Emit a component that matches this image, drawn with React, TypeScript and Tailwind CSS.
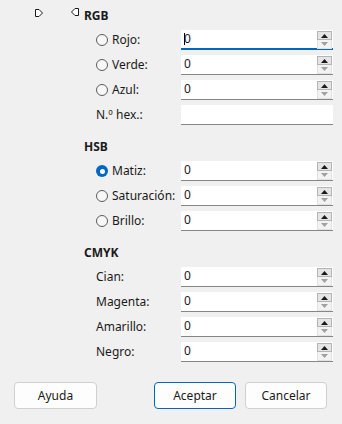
import React from 'react';

type Row = { label: string; radio?: boolean; checked?: boolean; spin?: boolean; value?: string; focused?: boolean };

const rgb: Row[] = [
  { label: 'Rojo:', radio: true, spin: true, value: '0', focused: true },
  { label: 'Verde:', radio: true, spin: true, value: '0' },
  { label: 'Azul:', radio: true, spin: true, value: '0' },
  { label: 'N.º hex.:', value: '' },
];

const hsb: Row[] = [
  { label: 'Matiz:', radio: true, checked: true, spin: true, value: '0' },
  { label: 'Saturación:', radio: true, spin: true, value: '0' },
  { label: 'Brillo:', radio: true, spin: true, value: '0' },
];

const cmyk: Row[] = [
  { label: 'Cian:', spin: true, value: '0' },
  { label: 'Magenta:', spin: true, value: '0' },
  { label: 'Amarillo:', spin: true, value: '0' },
  { label: 'Negro:', spin: true, value: '0' },
];

function Radio({ checked }: { checked?: boolean }) {
  if (checked) {
    return (
      <span className="w-[12px] h-[12px] rounded-full bg-[#0067c0] flex items-center justify-center shrink-0">
        <span className="w-[5px] h-[5px] rounded-full bg-white"></span>
      </span>
    );
  }
  return <span className="w-[12px] h-[12px] rounded-full border border-[#5c5c5c] bg-[#f7f7f7] shrink-0"></span>;
}

function Spin() {
  return (
    <div className="absolute right-[1px] top-[1px] w-[15px] flex flex-col">
      <div className="h-[9px] border border-[#b4b4b4] bg-[#e5e5e5] flex items-center justify-center">
        <svg width="7" height="4" viewBox="0 0 7 4"><path d="M0 4 L3.5 0 L7 4 Z" fill="#1a1a1a" /></svg>
      </div>
      <div className="h-[9px] border border-[#e2e2e2] border-t-0 bg-[#f3f3f3] flex items-center justify-center">
        <svg width="7" height="4" viewBox="0 0 7 4"><path d="M0 0 L3.5 4 L7 0 Z" fill="#a0a0a0" /></svg>
      </div>
    </div>
  );
}

function Field({ row }: { row: Row }) {
  return (
    <div className="flex items-center h-[20px]">
      <div className="w-[85px] flex items-center gap-[4px] shrink-0">
        {row.radio && <Radio checked={row.checked} />}
        <span className="text-[12px] leading-[16px] text-[#1a1a1a] whitespace-nowrap">{row.label}</span>
      </div>
      <div
        className={
          row.focused
            ? 'relative w-[152px] h-[20px] bg-white border-b-2 border-[#0067c0]'
            : 'relative w-[152px] h-[20px] bg-white border-b border-[#868686]'
        }
      >
        <span className="absolute left-[3px] top-[1px] text-[12px] leading-[16px] text-[#1a1a1a]">{row.value}</span>
        {row.focused && <span className="absolute left-[3px] top-[3px] w-px h-[12px] bg-black"></span>}
        {row.spin && <Spin />}
      </div>
    </div>
  );
}

function Group({ title, rows, first }: { title: string; rows: Row[]; first?: boolean }) {
  return (
    <div className={first ? 'flex flex-col' : 'flex flex-col mt-[14px]'}>
      <div className="h-[16px] text-[12px] leading-[16px] font-bold text-[#1a1a1a] mb-[6px]">{title}</div>
      <div className="flex flex-col gap-[5px] pl-[12px]">
        {rows.map((r) => (
          <Field key={r.label} row={r} />
        ))}
      </div>
    </div>
  );
}

export default function App() {
  return (
    <div
      className="w-[342px] h-[424px] bg-[#f0f0f0] flex flex-col overflow-hidden"
      style={{ fontFamily: '"Noto Sans", "Open Sans", Arial, sans-serif' }}
    >
      <div className="flex pt-[8px]">
        <div className="w-[84px] flex items-start pl-[35px] gap-[28px] pt-[1px] shrink-0">
          <svg width="8" height="8" viewBox="0 0 8 8">
            <path d="M0.5 0.5 H4 L7.5 4 L4 7.5 H0.5 Z" fill="#ffffff" stroke="#1a1a1a" strokeWidth="1" />
          </svg>
          <svg width="8" height="8" viewBox="0 0 8 8" className="-mt-[1px]">
            <path d="M7.5 0.5 H4 L0.5 4 L4 7.5 H7.5 Z" fill="#ffffff" stroke="#1a1a1a" strokeWidth="1" />
          </svg>
        </div>
        <div className="flex flex-col">
          <Group title="RGB" rows={rgb} first />
          <Group title="HSB" rows={hsb} />
          <Group title="CMYK" rows={cmyk} />
        </div>
      </div>
      <div className="flex mt-[20px] pl-[14px]">
        <button className="w-[83px] h-[27px] bg-[#fdfdfd] border border-[#d0d0d0] rounded-[4px] text-[12px] text-[#1a1a1a]">
          Ayuda
        </button>
        <button className="ml-[57px] w-[82px] h-[27px] bg-[#fdfdfd] border border-[#0067c0] rounded-[4px] text-[12px] text-[#1a1a1a]">
          Aceptar
        </button>
        <button className="ml-[9px] w-[82px] h-[27px] bg-[#fdfdfd] border border-[#d0d0d0] rounded-[4px] text-[12px] text-[#1a1a1a]">
          Cancelar
        </button>
      </div>
    </div>
  );
}
